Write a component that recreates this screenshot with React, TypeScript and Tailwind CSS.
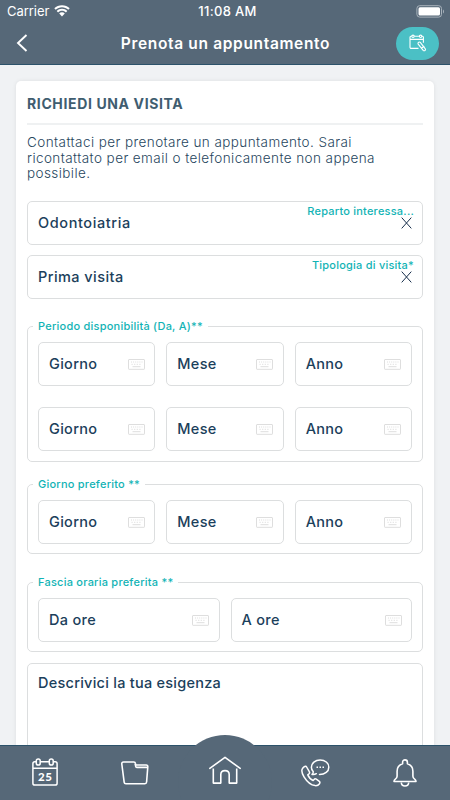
import type { ReactNode } from "react";

const dayParts = ["Giorno", "Mese", "Anno"];

function Wifi() {
  return (
    <svg width="16" height="12" viewBox="0 0 16 12" fill="#fff">
      <path d="M8 .2C5 .2 2.300 1.300.3 3.200l1.400 1.500C3.400 3.100 5.600 2.200 8 2.200s4.600.9 6.300 2.500l1.400-1.500C13.700 1.300 11 .2 8 .2Z" />
      <path d="M8 3.800c-2 0-3.900.8-5.300 2.100l1.400 1.500C5.100 6.400 6.500 5.800 8 5.800s2.900.6 3.900 1.600l1.400-1.500C11.900 4.600 10 3.800 8 3.800Z" />
      <path d="M8 7.300c-1.100 0-2.100.4-2.800 1.100L8 11.400l2.800-3C10.100 7.700 9.100 7.300 8 7.300Z" />
    </svg>
  );
}

function Battery() {
  return (
    <svg width="29" height="13" viewBox="0 0 29 13" fill="none">
      <rect x=".9" y=".7" width="24.600" height="11.400" rx="2.800" stroke="#a9b3bc" />
      <rect x="2.500" y="2.300" width="21.500" height="8.200" rx="1.500" fill="#fff" />
      <path d="M27 4.400c1.300.5 1.300 3.500 0 4Z" fill="#a9b3bc" />
    </svg>
  );
}

// calendar with a pencil across its lower corner
function BookIcon() {
  return (
    <svg width="18" height="18" viewBox="0 0 18 18" fill="none" stroke="#fff" strokeWidth="1.100" strokeLinejoin="round">
      <path d="M9.500 14.400H2.200a1.200 1.200 0 0 1-1.200-1.200V3.300a1 1 0 0 1 1-1h11.400a1 1 0 0 1 1 1v5.500M1 5.400h13.400" />
      <circle cx="4" cy="2.300" r="1.200" fill="#4bc0c5" />
      <circle cx="11.600" cy="2.300" r="1.200" fill="#4bc0c5" />
      <path d="M9 9.800c-.4-1.300 1.500-2.400 2.500-1.200l4.800 6.200c.9 1.300-1 2.700-2.100 1.500Z" />
      <path d="m12.300 14.200 2.900-2" />
    </svg>
  );
}

function Keyboard() {
  return (
    <svg width="17" height="11" viewBox="0 0 17 11" fill="none" stroke="#dedede">
      <rect x=".5" y=".5" width="16" height="9.800" rx=".5" />
      <path d="M3 3h11.500" strokeDasharray="1 1.100" />
      <path d="M3.500 5.300h10" strokeDasharray="1.200 1.400" />
      <path d="M4.500 7.700h8" />
    </svg>
  );
}

function CalendarIcon() {
  return (
    <svg width="26" height="29" viewBox="0 0 26 29" fill="none" stroke="#fff" strokeWidth="1.500">
      <path d="M4 3.700H2.800A2 2 0 0 0 .9 5.700v19.500c0 1.100.8 1.900 1.900 1.900h20.400c1.100 0 1.900-.8 1.900-1.900V5.700c0-1.100-.8-2-1.900-2H21.500M8.500 3.700h8.500M1 10.200h24" />
      <rect x="4.300" y=".9" width="3.900" height="6.200" rx="1.900" />
      <rect x="17.300" y=".9" width="3.900" height="6.200" rx="1.900" />
      <text x="13.200" y="22.600" textAnchor="middle" fill="#fff" stroke="none" className="font-['Lato'] text-[11.5px] font-black tracking-[0.5px]">25</text>
    </svg>
  );
}

function FolderIcon() {
  return (
    <svg width="28" height="24" viewBox="0 0 28 24" fill="none" stroke="#fff" strokeWidth="1.600" strokeLinejoin="round">
      <path d="M3.200 21.300.8 3c-.1-1.300.5-2 1.700-2h10.300c1 0 1.500.5 1.600 1.400l.3 1.600h10.500c1.100 0 1.700.7 1.600 1.800L25.600 21c-.1 1.100-.7 1.700-1.700 1.700H4.900c-1 0-1.600-.4-1.700-1.400Z" />
      <path d="m14.300 2.800.4 2.700c.1.600.5.900 1.100.9h10.900" />
    </svg>
  );
}

function HomeIcon() {
  return (
    <svg width="32" height="29" viewBox="0 0 32 29" fill="none" stroke="#fff" strokeWidth="1.600" strokeLinejoin="round">
      <path d="M.8 12.400 16 1.400l15.200 11" strokeLinecap="round" />
      <path d="M4.300 12.500v14.600h7.500v-8.500c0-2.300 1.700-4 4.200-4s4.200 1.700 4.200 4v8.500h7.500V12.500" />
    </svg>
  );
}

function CallIcon() {
  return (
    <svg width="29" height="28" viewBox="0 0 29 28" fill="none" stroke="#fff" strokeWidth="1.500" strokeLinejoin="round" strokeLinecap="round">
      <path d="M18.500 15.500c5.500 0 9.300-3 9.300-7.300S24 1 19.100 1s-8.700 3.200-8.700 7.200c0 1.800.7 3.400 1.900 4.600 0 1.200-.5 2-1.300 2.600 1.800.3 3.200 0 4.300-.7" />
      <path d="M3.400 7.600 1.900 8.900C.4 10.500.6 13.800 3 17.800c2.700 4.400 7.200 8.300 11.200 8.800 2 .2 3.300-.5 4.300-1.900.6-.9.5-1.700-.2-2.300l-3-2.200c-.8-.6-1.600-.5-2.200.2l-1 1.100c-2-.8-4.300-3.200-5.300-5.600l1.300-1.200c.6-.6.7-1.200.2-2L5.600 8c-.6-.9-1.400-1.100-2.200-.4Z" />
      <path d="M15.500 8.200h1.500M18.500 8.200h1.500M21.500 8.200h1.500" strokeLinecap="butt" strokeWidth="1.600" />
    </svg>
  );
}

function BellIcon() {
  return (
    <svg width="24" height="28" viewBox="0 0 24 28" fill="none" stroke="#fff" strokeWidth="1.600" strokeLinejoin="round">
      <path d="M9.600 4.800V3.300C9.600 1.800 10.600.9 12 .9s2.400.9 2.400 2.400v1.500c3.500 1 5.500 3.800 5.500 7.500v5c0 1.600.7 2.300 2 3.100.7.500 1.100 1 1.100 2.100H1c0-1.100.4-1.600 1.100-2.100 1.300-.8 2-1.500 2-3.100v-5c0-3.700 2-6.500 5.500-7.500Z" />
      <path d="M8.300 23.500c.1 2.200 1.600 3.500 3.700 3.500s3.600-1.300 3.700-3.500" />
    </svg>
  );
}

function SelectField({ value, label, tracking }: { value: string; label: string; tracking: string }) {
  return (
    <div className="flex h-[44px] shrink-0 items-center justify-between rounded-[5px] border border-[#dcdedf] pr-2 pl-[10px]">
      <span className={`text-[14.5px] font-medium ${tracking}`}>{value}</span>
      <div className="flex h-full flex-col items-end pt-[3px]">
        <span className="text-[11px] leading-[13px] font-medium tracking-[0.22px] text-[#12b3b5]">{label}</span>
        <svg width="11" height="12" viewBox="0 0 11 12" className="-mt-px mr-[2px]" stroke="#19304d" strokeWidth="1">
          <path d="m.7.600 9.600 10.800M10.300.600.7 11.400" />
        </svg>
      </div>
    </div>
  );
}

function Picker({ label }: { label: string }) {
  return (
    <div className="flex h-[44px] flex-1 items-center justify-between rounded-[5px] border border-[#dcdedf] pr-[9.500px] pl-[10px]">
      <span className="text-[14.5px] font-medium tracking-[0.3px]">{label}</span>
      <Keyboard />
    </div>
  );
}

function Group({ title, className, children }: { title: string; className: string; children: ReactNode }) {
  return (
    <fieldset className={`min-w-0 shrink-0 rounded-[5px] border border-[#dcdedf] px-[10px] ${className}`}>
      <legend className="-ml-[5px] px-[5px] text-[11px] leading-[14px] font-medium tracking-[0.23px] text-[#12b3b5]">{title}</legend>
      {children}
    </fieldset>
  );
}

function PickerRow({ labels }: { labels: string[] }) {
  return (
    <div className="flex gap-[11px]">
      {labels.map((l) => <Picker key={l} label={l} />)}
    </div>
  );
}

export default function App() {
  return (
    <div className="flex h-[800px] w-[450px] flex-col overflow-hidden bg-[#f0f2f4] font-['Inter','Liberation_Sans',sans-serif] text-[#1b405b]">
      <header className="h-[65px] shrink-0 border-b border-[#2c526a] bg-[#566878] text-white">
        <div className="grid h-[22px] grid-cols-3 items-center pr-[5px] pl-[7px]">
          <div className="flex items-center gap-[5px]">
            <span className="pt-px text-[13px] tracking-[-0.05px]">Carrier</span>
            <Wifi />
          </div>
          <span className="pt-px pl-[3px] text-center text-[13px] font-medium tracking-[0.3px]">11:08 AM</span>
          <div className="flex justify-end"><Battery /></div>
        </div>
        <div className="flex h-[42px] items-center justify-between pr-[11px] pl-4">
          <button className="w-[43px]">
            <svg width="12" height="18" viewBox="0 0 12 18" fill="none" stroke="#fff" strokeWidth="1.900">
              <path d="M10.500 1 2 9l8.500 8" />
            </svg>
          </button>
          <h1 className="-ml-1 pt-px text-[15.500px] font-semibold tracking-[0.66px]">Prenota un appuntamento</h1>
          <button className="flex h-[33px] w-[43px] items-center justify-center rounded-full bg-[#4bc0c5]">
            <BookIcon />
          </button>
        </div>
      </header>

      <main className="min-h-0 flex-1 overflow-hidden px-4 pt-4">
        <div className="flex h-[800px] flex-col rounded-[5px] bg-white px-[11px] shadow-[0_0_4px_rgba(0,0,0,0.08)]">
          <h2 className="h-[44px] shrink-0 border-b-2 border-[#eff1f2] pt-[13px] text-[14px] leading-[20px] font-bold tracking-[0.63px] text-[#405d70]">RICHIEDI UNA VISITA</h2>
          <p className="mt-[10px] text-[13.500px] leading-[15.700px] font-light tracking-[0.42px] text-[#27465e]">
            Contattaci per prenotare un appuntamento. Sarai<br />
            ricontattato per email o telefonicamente non appena<br />
            possibile.
          </p>
          <div className="mt-[19px] flex flex-col gap-[10px]">
            <SelectField value="Odontoiatria" label="Reparto interessa..." tracking="tracking-[0.6px]" />
            <SelectField value="Prima visita" label="Tipologia di visita*" tracking="tracking-[0.43px]" />
          </div>
          <Group title="Periodo disponibilità (Da, A)**" className="mt-5 h-[143px] pt-[9px]">
            <div className="flex flex-col gap-[21px]">
              <PickerRow labels={dayParts} />
              <PickerRow labels={dayParts} />
            </div>
          </Group>
          <Group title="Giorno preferito **" className="mt-[15px] h-[77px] pt-[9px]">
            <PickerRow labels={dayParts} />
          </Group>
          <Group title="Fascia oraria preferita **" className="mt-[21px] h-[77px] pt-[9px]">
            <PickerRow labels={["Da ore", "A ore"]} />
          </Group>
          <textarea
            className="mt-[11px] h-[120px] shrink-0 resize-none rounded-[5px] border border-[#dcdedf] px-[10px] pt-[9px] text-[14.500px] leading-[20px] font-medium tracking-[0.25px] placeholder:text-[#1b405b] placeholder:opacity-100"
            placeholder="Descrivici la tua esigenza"
          />
        </div>
      </main>

      <nav className="relative h-[55px] shrink-0 border-t border-[#2c526a] bg-[#566878]">
        <div className="absolute -top-[11px] left-[178px] size-[94px] rounded-full bg-[#566878]" />
        <div className="relative grid h-[53px] grid-cols-5 items-center justify-items-center">
          <CalendarIcon />
          <FolderIcon />
          <div className="-mt-[5px]"><HomeIcon /></div>
          <CallIcon />
          <BellIcon />
        </div>
      </nav>
    </div>
  );
}
